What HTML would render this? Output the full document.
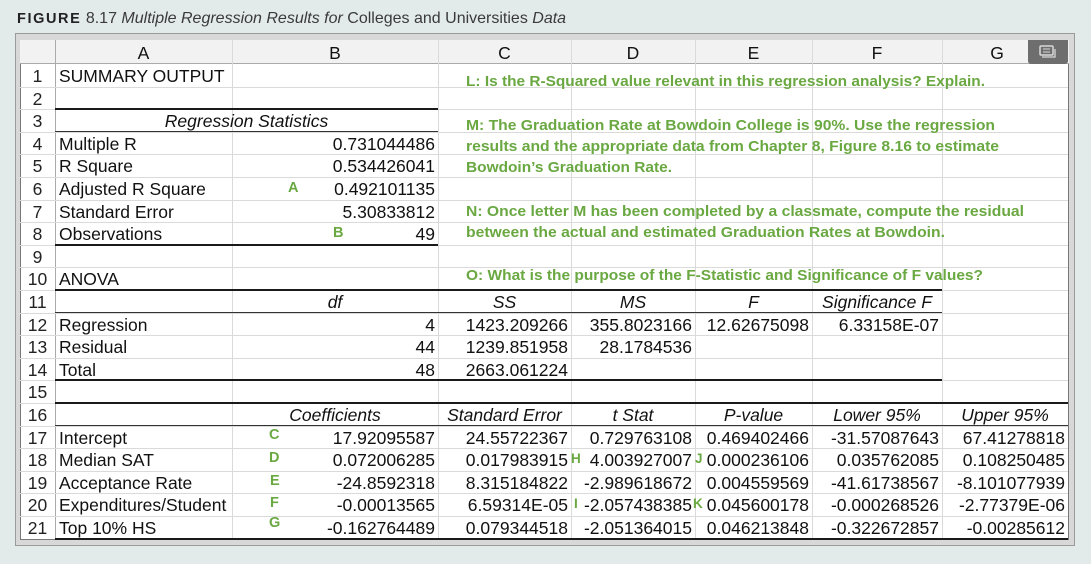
<!DOCTYPE html>
<html><head><meta charset="utf-8"><style>
*{margin:0;padding:0;box-sizing:border-box}
body{width:1091px;height:564px;background:#e3eaea;position:relative;overflow:hidden;font-family:"Liberation Sans",Arial,sans-serif}
.title{position:absolute;left:17px;top:10px;font-size:16px;color:#3a3a3a;white-space:nowrap}
.title b{letter-spacing:1.6px;font-weight:bold;color:#222;font-size:14.5px}
.frame{position:absolute;left:15px;top:33px;width:1060px;height:513px;border:1px solid #9a9a9a;background:#d8d8d8}
.inner{position:absolute;left:20px;top:40px;width:1049px;height:500px;background:#fff;border:1px solid #777}
.hdr{position:absolute;left:20px;top:40px;width:1049px;height:24px;background:#f2f2f2;border-bottom:1px solid #aaa}
.vl{position:absolute;top:40px;height:499px;width:1px;background:#dadada}
.hl{position:absolute;left:20px;width:1048px;height:1px;background:#dadada}
.t{position:absolute;height:22.6px;line-height:24px;font-size:17.5px;color:#111;white-space:nowrap;overflow:visible}
.r{text-align:right;padding-right:3px}
.c{text-align:center}
.i{font-style:italic}
.rn{left:20px;width:35px;text-align:center;color:#222}
.A{left:55px;width:177px;padding-left:4px}
.B{left:232px;width:206px}
.C{left:438px;width:133px}
.D{left:571px;width:124px}
.E{left:695px;width:117px}
.F{left:812px;width:130px}
.G{left:942px;width:126px}
.k{position:absolute;height:2px;background:#1a1a1a}
.k1{position:absolute;height:1px;background:#333}
.g{position:absolute;color:#6aa842;font-weight:bold;font-size:14.5px}
</style></head><body>
<div class="title"><b>FIGURE</b> 8.17 <i>Multiple Regression Results for</i> Colleges and Universities <i>Data</i></div>
<div class="frame"></div>
<div class="inner"></div>
<div class="hdr"></div>
<div class="vl" style="left:55px;background:#aaa"></div>
<div class="vl" style="left:232px"></div>
<div class="vl" style="left:438px"></div>
<div class="vl" style="left:571px"></div>
<div class="vl" style="left:695px"></div>
<div class="vl" style="left:812px"></div>
<div class="vl" style="left:942px"></div>
<div class="hl" style="top:86.6px"></div><div class="hl" style="top:109.2px"></div><div class="hl" style="top:131.8px"></div><div class="hl" style="top:154.4px"></div><div class="hl" style="top:177px"></div><div class="hl" style="top:199.6px"></div><div class="hl" style="top:222.2px"></div><div class="hl" style="top:244.8px"></div><div class="hl" style="top:267.4px"></div><div class="hl" style="top:290px"></div><div class="hl" style="top:312.6px"></div><div class="hl" style="top:335.2px"></div><div class="hl" style="top:357.8px"></div><div class="hl" style="top:380.4px"></div><div class="hl" style="top:403px"></div><div class="hl" style="top:425.6px"></div><div class="hl" style="top:448.2px"></div><div class="hl" style="top:470.8px"></div><div class="hl" style="top:493.4px"></div><div class="hl" style="top:516px"></div>
<div class="k" style="left:55px;width:383px;top:108px"></div>
<div class="k1" style="left:55px;width:383px;top:131px"></div>
<div class="k" style="left:55px;width:383px;top:244px"></div>
<div class="k" style="left:55px;width:887px;top:289px"></div>
<div class="k1" style="left:55px;width:887px;top:312px"></div>
<div class="k" style="left:55px;width:887px;top:379px"></div>
<div class="k" style="left:55px;width:1013px;top:402px"></div>
<div class="k1" style="left:55px;width:1013px;top:425px"></div>
<div class="k" style="left:55px;width:1013px;top:538px"></div>
<div class="t c A" style="top:41px;padding:0">A</div>
<div class="t c B" style="top:41px">B</div>
<div class="t c C" style="top:41px">C</div>
<div class="t c D" style="top:41px">D</div>
<div class="t c E" style="top:41px">E</div>
<div class="t c F" style="top:41px">F</div>
<div class="t c G" style="top:41px;width:110px">G</div>
<div style="position:absolute;left:1028px;top:40px;width:40px;height:24px;background:#6e6e6e;border-radius:0 0 3px 3px"></div>
<svg style="position:absolute;left:1039px;top:45px" width="18" height="14"><rect x="1" y="1" width="13" height="9" fill="none" stroke="#d8d8d8" stroke-width="1.5" rx="1"/><path d="M4 4h7M4 7h7" stroke="#d8d8d8"/><path d="M3 12h13V4" fill="none" stroke="#d8d8d8" stroke-width="1.3"/></svg>
<div class="t rn" style="top:64px">1</div><div class="t rn" style="top:86.6px">2</div><div class="t rn" style="top:109.2px">3</div><div class="t rn" style="top:131.8px">4</div><div class="t rn" style="top:154.4px">5</div><div class="t rn" style="top:177px">6</div><div class="t rn" style="top:199.6px">7</div><div class="t rn" style="top:222.2px">8</div><div class="t rn" style="top:244.8px">9</div><div class="t rn" style="top:267.4px">10</div><div class="t rn" style="top:290px">11</div><div class="t rn" style="top:312.6px">12</div><div class="t rn" style="top:335.2px">13</div><div class="t rn" style="top:357.8px">14</div><div class="t rn" style="top:380.4px">15</div><div class="t rn" style="top:403px">16</div><div class="t rn" style="top:425.6px">17</div><div class="t rn" style="top:448.2px">18</div><div class="t rn" style="top:470.8px">19</div><div class="t rn" style="top:493.4px">20</div><div class="t rn" style="top:516px">21</div>
<div class="t A" style="top:64px">SUMMARY OUTPUT</div>
<div class="t i c" style="top:109.2px;left:55px;width:383px">Regression Statistics</div>
<div class="t A" style="top:131.8px">Multiple R</div><div class="t r B" style="top:131.8px">0.731044486</div>
<div class="t A" style="top:154.4px">R Square</div><div class="t r B" style="top:154.4px">0.534426041</div>
<div class="t A" style="top:177px">Adjusted R Square</div><div class="t r B" style="top:177px">0.492101135</div>
<div class="t A" style="top:199.6px">Standard Error</div><div class="t r B" style="top:199.6px">5.30833812</div>
<div class="t A" style="top:222.2px">Observations</div><div class="t r B" style="top:222.2px">49</div>
<div class="t A" style="top:267.4px">ANOVA</div>
<div class="t i c B" style="top:290px">df</div><div class="t i c C" style="top:290px">SS</div><div class="t i c D" style="top:290px">MS</div><div class="t i c E" style="top:290px">F</div><div class="t i c F" style="top:290px">Significance F</div>
<div class="t A" style="top:312.6px">Regression</div><div class="t r B" style="top:312.6px">4</div><div class="t r C" style="top:312.6px">1423.209266</div><div class="t r D" style="top:312.6px">355.8023166</div><div class="t r E" style="top:312.6px">12.62675098</div><div class="t r F" style="top:312.6px">6.33158E-07</div>
<div class="t A" style="top:335.2px">Residual</div><div class="t r B" style="top:335.2px">44</div><div class="t r C" style="top:335.2px">1239.851958</div><div class="t r D" style="top:335.2px">28.1784536</div>
<div class="t A" style="top:357.8px">Total</div><div class="t r B" style="top:357.8px">48</div><div class="t r C" style="top:357.8px">2663.061224</div>
<div class="t i c B" style="top:403px">Coefficients</div><div class="t i c C" style="top:403px">Standard Error</div><div class="t i c D" style="top:403px">t Stat</div><div class="t i c E" style="top:403px">P-value</div><div class="t i c F" style="top:403px">Lower 95%</div><div class="t i c G" style="top:403px">Upper 95%</div>
<div class="t A" style="top:425.6px">Intercept</div><div class="t r B" style="top:425.6px">17.92095587</div><div class="t r C" style="top:425.6px">24.55722367</div><div class="t r D" style="top:425.6px">0.729763108</div><div class="t r E" style="top:425.6px">0.469402466</div><div class="t r F" style="top:425.6px">-31.57087643</div><div class="t r G" style="top:425.6px">67.41278818</div>
<div class="t A" style="top:448.2px">Median SAT</div><div class="t r B" style="top:448.2px">0.072006285</div><div class="t r C" style="top:448.2px">0.017983915</div><div class="t r D" style="top:448.2px">4.003927007</div><div class="t r E" style="top:448.2px">0.000236106</div><div class="t r F" style="top:448.2px">0.035762085</div><div class="t r G" style="top:448.2px">0.108250485</div>
<div class="t A" style="top:470.8px">Acceptance Rate</div><div class="t r B" style="top:470.8px">-24.8592318</div><div class="t r C" style="top:470.8px">8.315184822</div><div class="t r D" style="top:470.8px">-2.989618672</div><div class="t r E" style="top:470.8px">0.004559569</div><div class="t r F" style="top:470.8px">-41.61738567</div><div class="t r G" style="top:470.8px">-8.101077939</div>
<div class="t A" style="top:493.4px">Expenditures/Student</div><div class="t r B" style="top:493.4px">-0.00013565</div><div class="t r C" style="top:493.4px">6.59314E-05</div><div class="t r D" style="top:493.4px">-2.057438385</div><div class="t r E" style="top:493.4px">0.045600178</div><div class="t r F" style="top:493.4px">-0.000268526</div><div class="t r G" style="top:493.4px">-2.77379E-06</div>
<div class="t A" style="top:516px">Top 10% HS</div><div class="t r B" style="top:516px">-0.162764489</div><div class="t r C" style="top:516px">0.079344518</div><div class="t r D" style="top:516px">-2.051364015</div><div class="t r E" style="top:516px">0.046213848</div><div class="t r F" style="top:516px">-0.322672857</div><div class="t r G" style="top:516px">-0.00285612</div>
<div class="g" style="left:288px;top:180px">A</div>
<div class="g" style="left:333px;top:225px">B</div>
<div class="g" style="left:269px;top:427px">C</div>
<div class="g" style="left:269px;top:450px">D</div>
<div class="g" style="left:270px;top:473px">E</div>
<div class="g" style="left:270px;top:495px">F</div>
<div class="g" style="left:269px;top:515px">G</div>
<div class="g" style="left:571px;top:451px;font-size:13.5px">H</div>
<div class="g" style="left:695px;top:451px;font-size:13.5px">J</div>
<div class="g" style="left:574px;top:496px;font-size:13.5px">I</div>
<div class="g" style="left:693px;top:496px;font-size:13.5px">K</div>
<svg style="position:absolute;left:0;top:0" width="1091" height="564">
<g fill="#6aa842" font-family="Liberation Sans, Arial, sans-serif" font-weight="bold" font-size="15">
<text x="466" y="86" textLength="519" lengthAdjust="spacingAndGlyphs">L:  Is the R-Squared value relevant in this regression analysis?  Explain.</text>
<text x="466" y="130" textLength="529" lengthAdjust="spacingAndGlyphs">M:  The Graduation Rate at Bowdoin College is 90%.  Use the regression</text>
<text x="466" y="151" textLength="533" lengthAdjust="spacingAndGlyphs">results and the appropriate data from Chapter 8, Figure 8.16 to estimate</text>
<text x="466" y="172" textLength="206" lengthAdjust="spacingAndGlyphs">Bowdoin’s Graduation Rate.</text>
<text x="466" y="216" textLength="558" lengthAdjust="spacingAndGlyphs">N:  Once letter M has been completed by a classmate, compute the residual</text>
<text x="466" y="237" textLength="479" lengthAdjust="spacingAndGlyphs">between the actual and estimated Graduation Rates at Bowdoin.</text>
<text x="466" y="280" textLength="517" lengthAdjust="spacingAndGlyphs">O:   What is the purpose of the F-Statistic and Significance of F values?</text>
</g></svg>
</body></html>
